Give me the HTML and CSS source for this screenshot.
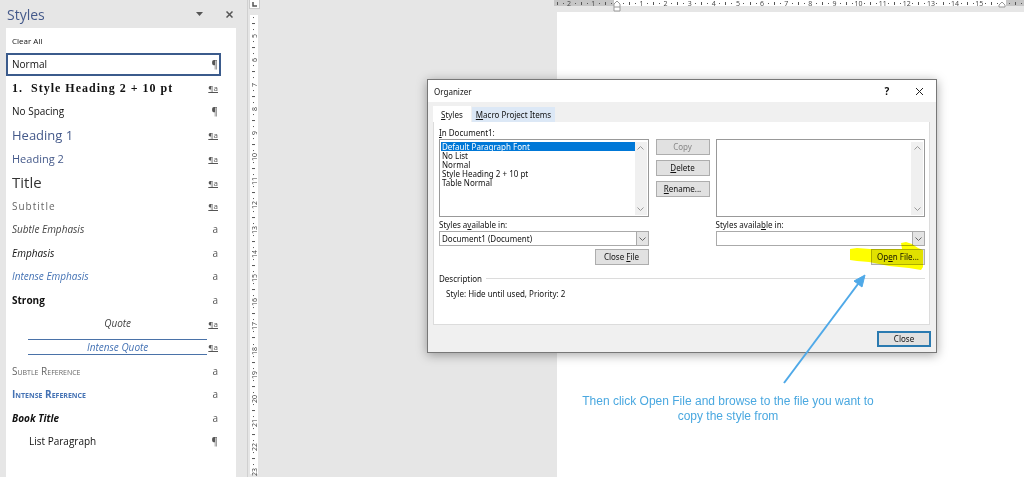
FILE: index.html
```html
<!DOCTYPE html>
<html lang="en">
<head>
  <meta charset="UTF-8" />
  <title>Organizer</title>
  <meta name="viewport" content="width=device-width, initial-scale=1.0" />
  <link rel="stylesheet" href="styles.css">
</head>
<body>
  <aside class="pane">
    <header class="pane-header">
      <h1>Styles</h1>
      <button class="pane-btn" aria-label="Pane options">
        <svg width="7" height="4" viewBox="0 0 7 4"><path d="M0 0h7L3.500 4z" fill="#555"/></svg>
      </button>
      <button class="pane-btn" aria-label="Close pane">
        <svg width="7" height="7" viewBox="0 0 7 7"><path d="M.5.5l6 6M6.500.5l-6 6" stroke="#555" stroke-width="1.500"/></svg>
      </button>
    </header>
    <ul class="style-list">
      <li><button class="clear-all"><span>Clear All</span></button></li>
      <li><button class="selected"><span>Normal</span><i>¶</i></button></li>
      <li><button class="style-heading"><span>1.&nbsp; Style Heading 2 + 10 pt</span><i class="linked">¶a</i></button></li>
      <li><button><span>No Spacing</span><i>¶</i></button></li>
      <li><button class="heading-1"><span>Heading 1</span><i class="linked">¶a</i></button></li>
      <li><button class="heading-2"><span>Heading 2</span><i class="linked">¶a</i></button></li>
      <li><button class="title"><span>Title</span><i class="linked">¶a</i></button></li>
      <li><button class="subtitle"><span>Subtitle</span><i class="linked">¶a</i></button></li>
      <li><button class="subtle-emphasis"><span>Subtle Emphasis</span><i>a</i></button></li>
      <li><button class="emphasis"><span>Emphasis</span><i>a</i></button></li>
      <li><button class="intense-emphasis"><span>Intense Emphasis</span><i>a</i></button></li>
      <li><button class="strong"><span>Strong</span><i>a</i></button></li>
      <li><button class="quote"><span>Quote</span><i class="linked">¶a</i></button></li>
      <li><button class="quote intense-quote"><span>Intense Quote</span><i class="linked">¶a</i></button></li>
      <li><button class="subtle-reference"><span>Subtle Reference</span><i>a</i></button></li>
      <li><button class="intense-reference"><span>Intense Reference</span><i>a</i></button></li>
      <li><button class="book-title"><span>Book Title</span><i>a</i></button></li>
      <li><button class="list-paragraph"><span>List Paragraph</span><i>¶</i></button></li>
    </ul>
  </aside>

  <div class="side-ruler">
    <div class="tab-selector">
      <svg width="5" height="5" viewBox="0 0 5 5"><path d="M1 0v4h4" fill="none" stroke="#555" stroke-width="1.500"/></svg>
    </div>
    <div class="ruler ruler-v" id="ruler-v"></div>
  </div>

  <main class="document">
    <div class="ruler ruler-h" id="ruler-h"></div>
    <div class="page"></div>
  </main>

  <section class="dialog" role="dialog" aria-labelledby="dialog-title">
    <header class="dialog-header">
      <h2 id="dialog-title">Organizer</h2>
      <button class="dialog-btn">?</button>
      <button class="dialog-btn" aria-label="Close dialog">
        <svg width="9" height="9" viewBox="0 0 9 9"><path d="M1 1l7 7M8 1l-7 7" stroke="#222"/></svg>
      </button>
    </header>

    <div class="tabs">
      <button class="tab active"><span><u>S</u>tyles</span></button>
      <button class="tab"><span><u>M</u>acro Project Items</span></button>
    </div>

    <div class="panel">
      <div class="columns">
        <div class="column">
          <label for="list-left"><u>I</u>n Document1:</label>
          <div class="listbox">
            <select id="list-left" size="8">
              <option selected>Default Paragraph Font</option>
              <option>No List</option>
              <option>Normal</option>
              <option>Style Heading 2 + 10 pt</option>
              <option>Table Normal</option>
            </select>
            <div class="scrollbar">
              <svg width="7" height="4" viewBox="0 0 7 4"><path d="M.5 3.500l3-3 3 3"/></svg>
              <svg width="7" height="4" viewBox="0 0 7 4"><path d="M.5.5l3 3 3-3"/></svg>
            </div>
          </div>
          <label for="file-left">Styles a<u>v</u>ailable in:</label>
          <div class="combo">
            <select id="file-left"><option>Document1 (Document)</option></select>
            <span class="combo-arrow"><svg width="7" height="4" viewBox="0 0 7 4"><path d="M.5.5l3 3 3-3"/></svg></span>
          </div>
          <button class="btn"><span>Close <u>F</u>ile</span></button>
        </div>

        <div class="actions">
          <button class="btn" disabled>Copy</button>
          <button class="btn"><span><u>D</u>elete</span></button>
          <button class="btn"><span><u>R</u>ename...</span></button>
        </div>

        <div class="column">
          <label for="list-right">&nbsp;</label>
          <div class="listbox">
            <select id="list-right" size="8"></select>
            <div class="scrollbar">
              <svg width="7" height="4" viewBox="0 0 7 4"><path d="M.5 3.500l3-3 3 3"/></svg>
              <svg width="7" height="4" viewBox="0 0 7 4"><path d="M.5.5l3 3 3-3"/></svg>
            </div>
          </div>
          <label for="file-right">Styles availa<u>b</u>le in:</label>
          <div class="combo">
            <select id="file-right"></select>
            <span class="combo-arrow"><svg width="7" height="4" viewBox="0 0 7 4"><path d="M.5.5l3 3 3-3"/></svg></span>
          </div>
          <button class="btn"><span>Op<u>e</u>n File...</span></button>
        </div>
      </div>

      <h3>Description</h3>
      <p>Style: Hide until used, Priority: 2</p>
    </div>

    <footer class="dialog-footer">
      <button class="btn primary">Close</button>
    </footer>
  </section>

  <!-- marker over the Open File button -->
  <svg class="highlight" width="76" height="32" viewBox="0 0 76 32">
    <path d="M1 8L8 7 21 8H53L52 2 57 1 63 3 69 7 74 9 74 26 72 29 60 27 40 25 20 21 8 20 1 19z" fill="#ff0"/>
  </svg>
  <svg class="arrow" width="84" height="110" viewBox="0 0 84 110">
    <path d="M1 109L75 10" stroke="#4fa9e8" stroke-width="2"/>
    <path d="M82 1L79 13 71 7z" fill="#4fa9e8" stroke="#4fa9e8"/>
  </svg>
  <p class="note">Then click Open File and browse to the file you want to<br>copy the style from</p>

  <script>
    // four marks per centimetre: number, dot, bar, dot
    function drawRuler(id, first, count, marginFrom, marginTo) {
      const ruler = document.getElementById(id);
      for (let i = first; i < first + count; i++) {
        const mark = document.createElement('span');
        const quarter = ((i % 4) + 4) % 4;
        if (quarter === 0) {
          mark.className = 'number';
          mark.textContent = i === marginFrom || i === marginTo ? '' : Math.abs(i / 4);
        } else {
          mark.className = quarter === 2 ? 'bar' : 'dot';
        }
        if (i < marginFrom || i > marginTo) mark.classList.add('margin');
        ruler.appendChild(mark);
      }
    }

    drawRuler('ruler-h', -10, 78, 0, 64);
    drawRuler('ruler-v', 17, 76, 0, 200);

    document.getElementById('ruler-h').insertAdjacentHTML('beforeend',
      '<svg class="indent indent-left" width="8" height="12" viewBox="0 0 8 12"><path d="M1 7V4l3-3 3 3v7H1V7h6" fill="#fff" stroke="#999"/></svg>' +
      '<svg class="indent indent-right" width="8" height="8" viewBox="0 0 8 8"><path d="M1 7V5l3-3 3 3v2z" fill="#fff" stroke="#999"/></svg>');
  </script>
</body>
</html>
```
FILE: styles.css
```css
* {
  box-sizing: border-box;
}

body {
  margin: 0;
  height: 100vh;
  display: flex;
  overflow: hidden;
  position: relative;
  background: #e6e6e6;
  color: #222;
  font-family: "Open Sans", sans-serif;
  font-size: 8px;
}

h1, h2, h3, p, ul {
  margin: 0;
  padding: 0;
  font-weight: normal;
}

button, select {
  font: inherit;
  color: inherit;
  margin: 0;
  padding: 0;
  border: 0;
  border-radius: 0;
  background: none;
}

/* styles pane */
.pane {
  width: 247px;
  display: flex;
  flex-direction: column;
  background: #e6e6e6;
}

.pane-header {
  height: 28px;
  display: flex;
  align-items: center;
  padding: 0 12px 0 7px;
}

.pane-header h1 {
  flex: 1;
  font-size: 14px;
  color: #44598a;
}

.pane-btn {
  width: 12px;
  height: 12px;
  margin-left: 18px;
  display: flex;
  align-items: center;
  justify-content: center;
}

.style-list {
  flex: 1;
  margin: 0 11px 0 6px;
  padding: 1px 15px 24px 0;
  background: #fff;
  list-style: none;
  display: grid;
  grid-template-rows: repeat(18, 1fr);
}

.style-list li {
  display: flex;
}

.style-list button {
  flex: 1;
  display: flex;
  align-items: center;
  justify-content: space-between;
  padding: 0 3px 0 6px;
  font-size: 10px;
  line-height: 14px;
  text-align: left;
  color: #111;
}

.style-list i {
  font: 10px "Open Sans", sans-serif;
  color: #555;
}

.style-list .linked {
  font-size: 8px;
  text-decoration: underline;
}

.style-list .clear-all {
  font-size: 8px;
}

.style-list .selected {
  border: 2px solid #3b5b8c;
  padding: 0 1px 0 4px;
}

.style-list .style-heading {
  font-family: "Liberation Serif", serif;
  font-weight: bold;
  font-size: 12px;
  letter-spacing: 1px;
}

.style-list .heading-1 {
  font-size: 13px;
  color: #44598a;
}

.style-list .heading-2 {
  font-size: 11px;
  color: #44598a;
}

.style-list .title {
  font-size: 15px;
  color: #333;
}

.style-list .subtitle {
  color: #666;
  letter-spacing: 1px;
}

.style-list .subtitle i,
.style-list .style-heading i {
  letter-spacing: 0;
}

.subtle-emphasis span,
.emphasis span,
.intense-emphasis span,
.quote span,
.book-title span {
  font-style: italic;
}

.style-list .subtle-emphasis,
.style-list .quote {
  color: #444;
}

.style-list .intense-emphasis {
  color: #4472b4;
}

.strong span,
.book-title span,
.intense-reference span {
  font-weight: bold;
}

.quote span {
  flex: 1;
  margin: 0 1px 0 16px;
  text-align: center;
}

.intense-quote span {
  border-top: 1px solid #4a72a8;
  border-bottom: 1px solid #4a72a8;
  color: #4472b4;
}

.subtle-reference span,
.intense-reference span {
  font-variant: small-caps;
}

.style-list .subtle-reference {
  color: #666;
}

.style-list .intense-reference {
  color: #4472b4;
}

.style-list .list-paragraph {
  padding-left: 23px;
}

/* rulers */
.side-ruler {
  width: 13px;
  border-left: 1px solid #d0d0d0;
  display: flex;
  flex-direction: column;
  align-items: center;
}

.tab-selector {
  width: 11px;
  height: 9px;
  margin-bottom: 6px;
  display: flex;
  align-items: center;
  justify-content: center;
  background: #fff;
  border: 1px solid #ccc;
  border-top: 0;
}

.ruler {
  display: flex;
  font-size: 7px;
  line-height: 7px;
  color: #444;
}

.ruler span {
  flex: 1 1 0;
  min-width: 0;
  min-height: 0;
  display: flex;
  align-items: center;
  justify-content: center;
  white-space: nowrap;
  background: #fff;
}

.ruler .margin {
  background: #c6c6c6;
}

.ruler .number {
  position: relative;
  z-index: 1;
  background: none;
}

.ruler .dot::before,
.ruler .bar::before {
  content: "";
  width: 1px;
  height: 1px;
  background: #555;
}

.ruler-h {
  position: relative;
  height: 6px;
  margin: 0 0 6px 294px;
  background: linear-gradient(to right, #c6c6c6 60px, #fff 60px);
}

.ruler-h .bar::before {
  height: 3px;
}

.ruler-v {
  flex: 1;
  width: 8px;
  flex-direction: column;
  margin-bottom: 3px;
  background: #fff;
}

.ruler-v span {
  writing-mode: vertical-rl;
  transform: rotate(180deg);
}

.ruler-v .bar::before {
  width: 3px;
}

.indent {
  position: absolute;
  z-index: 2;
  top: 0;
}

.indent-left {
  left: 59px;
}

.indent-right {
  right: 18px;
}

.document {
  flex: 1;
  display: flex;
  flex-direction: column;
}

.page {
  flex: 1;
  margin-left: 297px;
  background: #fff;
}

/* organizer window */
.dialog {
  position: absolute;
  z-index: 3;
  left: 427px;
  top: 79px;
  width: 510px;
  background: #f0f0f0;
  border: 1px solid #777;
  box-shadow: 0 2px 10px rgba(0,0,0,0.35);
  color: #111;
  font-family: "Noto Sans", sans-serif;
}

.dialog-header {
  height: 22px;
  display: flex;
  align-items: center;
  padding: 0 11px 0 6px;
  background: #fff;
}

.dialog-header h2 {
  flex: 1;
  font-size: 8px;
}

.dialog-btn {
  width: 12px;
  height: 12px;
  margin-left: 20px;
  display: flex;
  align-items: center;
  justify-content: center;
  font-size: 10px;
  font-weight: bold;
}

.tabs {
  display: flex;
  align-items: flex-end;
  gap: 1px;
  padding: 4px 5px 0;
}

.tab {
  height: 15px;
  padding: 0 4px;
  background: #dce8f6;
}

.tab.active {
  height: 16px;
  padding: 0 8px;
  background: #fff;
}

.panel {
  margin: 0 6px 0 5px;
  height: 203px;
  padding: 4px 4px 0 5px;
  background: #fff;
  border: 1px solid #dcdcdc;
  border-top: 0;
}

.columns {
  display: grid;
  grid-template-columns: 1fr 53px 1fr;
  gap: 7px;
}

.column {
  display: flex;
  flex-direction: column;
}

.column label {
  line-height: 13px;
}

.listbox {
  display: flex;
  height: 78px;
  margin-bottom: 1px;
  padding: 2px 1px 1px;
  background: #fff;
  border: 1px solid #999;
}

.listbox select {
  flex: 1;
  min-width: 0;
  appearance: none;
  overflow: hidden;
}

.listbox option {
  height: 9px;
  min-height: 0;
  padding: 0 1px;
  display: flex;
  align-items: center;
  font-size: 8px;
  line-height: 9px;
}

.listbox option:checked {
  background: linear-gradient(#0078d7, #0078d7);
  color: #fff;
}

.scrollbar {
  width: 12px;
  padding: 4px 0;
  display: flex;
  flex-direction: column;
  align-items: center;
  justify-content: space-between;
  background: #f0f0f0;
}

.scrollbar path,
.combo-arrow path {
  fill: none;
  stroke: #999;
}

.combo {
  position: relative;
  height: 15px;
  margin-bottom: 3px;
}

.combo select {
  width: 100%;
  height: 100%;
  padding: 0 14px 0 2px;
  appearance: none;
  border: 1px solid #aaa;
}

.combo-arrow {
  position: absolute;
  top: 0;
  right: 0;
  bottom: 0;
  width: 13px;
  display: flex;
  align-items: center;
  justify-content: center;
  background: #e4e4e4;
  border: 1px solid #aaa;
  pointer-events: none;
}

.combo-arrow path {
  stroke: #666;
}

.btn {
  width: 54px;
  height: 16px;
  line-height: 12px;
  background: #e1e1e1;
  border: 1px solid #adadad;
}

.btn:disabled {
  color: #888;
}

.column .btn {
  align-self: flex-end;
}

.actions {
  display: flex;
  flex-direction: column;
  gap: 5px;
  padding-top: 13px;
}

.panel h3 {
  display: flex;
  align-items: center;
  gap: 4px;
  margin-top: 7px;
  font-size: 8px;
  line-height: 13px;
}

.panel h3::after {
  content: "";
  flex: 1;
  height: 1px;
  background: #dcdcdc;
}

.panel p {
  padding: 2px 7px;
  line-height: 13px;
}

.dialog-footer {
  display: flex;
  justify-content: flex-end;
  padding: 6px 5px 5px;
}

.btn.primary {
  border: 2px solid #2a7ab0;
}

/* annotation */
.highlight {
  position: absolute;
  z-index: 4;
  left: 849px;
  top: 241px;
  mix-blend-mode: multiply;
}

.arrow {
  position: absolute;
  z-index: 4;
  left: 783px;
  top: 274px;
}

.note {
  position: absolute;
  z-index: 4;
  left: 578px;
  top: 394px;
  width: 300px;
  font-family: "Liberation Sans", sans-serif;
  font-size: 12px;
  line-height: 15px;
  text-align: center;
  color: #4aa8e0;
}
```
